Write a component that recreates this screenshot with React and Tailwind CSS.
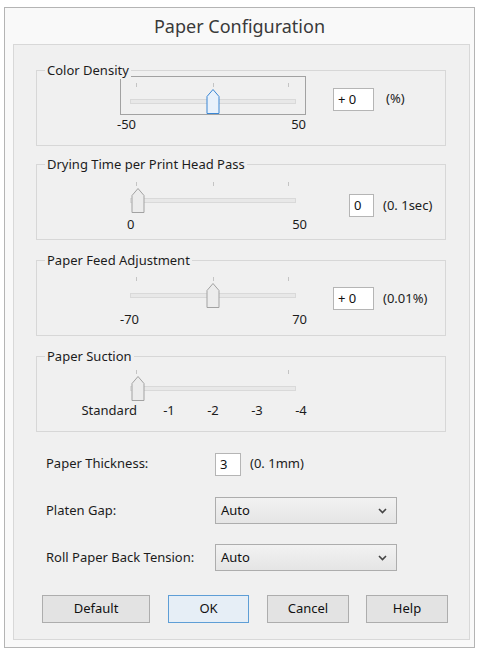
import React from "react";

const font = { fontFamily: '"Noto Sans", "Open Sans", Arial, sans-serif' };

// slider drawing: track, ticks, thumb (svg coords, 185 wide)
const SliderArt = ({ ticks, thumb, focused }) => (
  <svg width="186" height="46" className="block overflow-visible">
    {focused && (
      <rect x="0.5" y="5.5" width="185" height="38" fill="none" stroke="#555" strokeDasharray="1 1" />
    )}
    {ticks.map((t) => (
      <line key={t} x1={t + 0.5} x2={t + 0.5} y1="12" y2="16" stroke="#c4c4c4" />
    ))}
    <rect x="10.5" y="28.5" width="165" height="4" fill="#e8e8e8" stroke="#d9d9d9" />
    <path
      d={`M${thumb - 6} 25.5 L${thumb} 18.5 L${thumb + 6} 25.5 V42.5 H${thumb - 6} Z`}
      fill={focused ? "#e8f1fb" : "#ececec"}
      stroke={focused ? "#3a86d4" : "#a2a2a2"}
    />
  </svg>
);

const Group = ({ title, top, children }) => (
  <div
    className="relative ml-[22px] w-[410px] h-[76px] border border-[#d7d7d7]"
    style={{ marginTop: top }}
  >
    <span className="absolute -top-[10px] left-[8px] px-[2px] bg-[#f0f0f0] text-[13px] leading-[18px] text-[#1c1c1c]">
      {title}
    </span>
    {children}
  </div>
);

const ValueBox = ({ value, w }) => (
  <div
    className={`h-[23px] ${w} bg-white border border-[#b5b5b5] text-[13px] leading-[21px] pl-[4px] text-[#111]`}
  >
    {value}
  </div>
);

const Select = () => (
  <div className="w-[182px] h-[27px] flex items-center justify-between pl-[5px] pr-[9px] border border-[#adadad] bg-gradient-to-b from-[#f2f2f2] to-[#e5e5e5] text-[13px] text-[#111]">
    <span>Auto</span>
    <svg width="9" height="6" viewBox="0 0 9 6">
      <path d="M1 1 L4.5 4.5 L8 1" fill="none" stroke="#444" strokeWidth="1.6" />
    </svg>
  </div>
);

const Button = ({ label, w, primary }) => (
  <div
    className={`h-[28px] ${w} flex items-center justify-center text-[13px] text-[#111] border ${
      primary ? "border-[#5e9ed6] bg-[#e6eef6]" : "border-[#adadad] bg-[#e3e3e3]"
    }`}
  >
    {label}
  </div>
);

export default function App() {
  return (
    <div className="w-[478px] h-[654px] bg-white pt-[7px] pl-[4px]" style={font}>
      <div className="w-[471px] h-[641px] border border-[#b4b4b4] bg-[#f9f9f9] flex flex-col">
        <div className="h-[36px] flex items-center justify-center text-[18px] text-[#3a3a3a]">
          Paper Configuration
        </div>

        <div className="ml-[8px] w-[457px] h-[596px] border border-[#d8d8d8] bg-[#f0f0f0] flex flex-col text-[#1c1c1c]">
          {/* Color Density */}
          <Group title="Color Density" top={25}>
            <div className="flex pl-[83px]">
              <div className="w-[185px]">
                <SliderArt ticks={[16, 93, 168]} thumb={93} focused />
                <div className="flex justify-between w-[189px] -ml-[3px] -mt-[1px] text-[13px] leading-[16px]">
                  <span>-50</span>
                  <span>50</span>
                </div>
              </div>
              <div className="w-[69px] flex justify-end mt-[17px]">
                <ValueBox value="+ 0" w="w-[41px]" />
              </div>
              <span className="ml-[12px] mt-[19px] text-[13px] leading-[16px]">(%)</span>
            </div>
          </Group>

          {/* Drying Time */}
          <Group title="Drying Time per Print Head Pass" top={18}>
            <div className="flex pl-[83px] pt-[5px]">
              <div className="w-[185px]">
                <SliderArt ticks={[16, 93, 168]} thumb={18} />
                <div className="flex justify-between w-[180px] ml-[7px] text-[13px] leading-[16px]">
                  <span>0</span>
                  <span>50</span>
                </div>
              </div>
              <div className="w-[69px] flex justify-end mt-[24px]">
                <ValueBox value="0" w="w-[25px]" />
              </div>
              <span className="ml-[9px] mt-[27px] text-[13px] leading-[16px]">(0. 1sec)</span>
            </div>
          </Group>

          {/* Paper Feed */}
          <Group title="Paper Feed Adjustment" top={20}>
            <div className="flex pl-[83px] pt-[4px]">
              <div className="w-[185px]">
                <SliderArt ticks={[16, 93, 168]} thumb={93} />
                <div className="flex justify-between w-[187px] text-[13px] leading-[16px]">
                  <span>-70</span>
                  <span>70</span>
                </div>
              </div>
              <div className="w-[69px] flex justify-end mt-[22px]">
                <ValueBox value="+ 0" w="w-[41px]" />
              </div>
              <span className="ml-[9px] mt-[25px] text-[13px] leading-[16px]">(0.01%)</span>
            </div>
          </Group>

          {/* Paper Suction */}
          <Group title="Paper Suction" top={20}>
            <div className="pl-[83px] pt-[1px]">
              <SliderArt ticks={[16, 168]} thumb={18} />
              <div className="flex -ml-[44px] -mt-[2px] text-[13px] leading-[16px]">
                <span className="w-[61px] text-right">Standard</span>
                <span className="w-[44px] ml-[10px] text-center">-1</span>
                <span className="w-[44px] text-center">-2</span>
                <span className="w-[44px] text-center">-3</span>
                <span className="w-[44px] text-center">-4</span>
              </div>
            </div>
          </Group>

          {/* Paper Thickness */}
          <div className="flex items-center h-[24px] mt-[20px] ml-[32px] text-[13px]">
            <span className="w-[169px]">Paper Thickness:</span>
            <ValueBox value="3" w="w-[26px]" />
            <span className="ml-[9px]">(0. 1mm)</span>
          </div>

          <div className="flex items-center h-[27px] mt-[21px] ml-[32px] text-[13px]">
            <span className="w-[169px]">Platen Gap:</span>
            <Select />
          </div>

          <div className="flex items-center h-[27px] mt-[20px] ml-[32px] text-[13px]">
            <span className="w-[169px]">Roll Paper Back Tension:</span>
            <Select />
          </div>

          <div className="flex mt-[24px] ml-[28px]">
            <Button label="Default" w="w-[108px]" />
            <div className="ml-[18px]">
              <Button label="OK" w="w-[81px]" primary />
            </div>
            <div className="ml-[18px]">
              <Button label="Cancel" w="w-[82px]" />
            </div>
            <div className="ml-[17px]">
              <Button label="Help" w="w-[82px]" />
            </div>
          </div>
        </div>
      </div>
    </div>
  );
}
